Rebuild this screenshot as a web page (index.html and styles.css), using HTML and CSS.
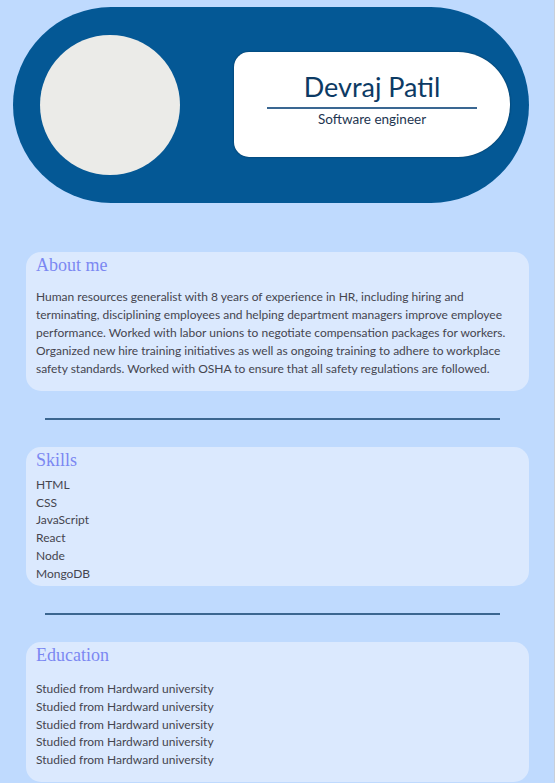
FILE: index.html
```html
<!DOCTYPE html>
<html lang="en">
<head>
  <meta charset="UTF-8" />
  <meta name="viewport" content="width=device-width, initial-scale=1.0">
  <title>Devraj Patil - Resume</title>
  <link rel="stylesheet" href="styles.css">
</head>
<body>

  <!-- Header -->
  <div class="header">
    <div class="photo"></div>
    <div class="nameCard">
      <h1>Devraj Patil</h1>
      <hr>
      <p>Software engineer</p>
    </div>
  </div>

  <div class="section about">
    <h3>About me</h3>
    <p>Human resources generalist with 8 years of experience in HR, including hiring and terminating, disciplining employees and helping department managers improve employee performance. Worked with labor unions to negotiate compensation packages for workers. Organized new hire training initiatives as well as ongoing training to adhere to workplace safety standards. Worked with OSHA to ensure that all safety regulations are followed.</p>
  </div>

  <hr class="divider">

  <div class="section skills">
    <h3>Skills</h3>
    <ul>
      <li>HTML</li>
      <li>CSS</li>
      <li>JavaScript</li>
      <li>React</li>
      <li>Node</li>
      <li>MongoDB</li>
    </ul>
  </div>

  <hr class="divider">

  <div class="section education">
    <h3>Education</h3>
    <ul>
      <li>Studied from Hardward university</li>
      <li>Studied from Hardward university</li>
      <li>Studied from Hardward university</li>
      <li>Studied from Hardward university</li>
      <li>Studied from Hardward university</li>
    </ul>
  </div>

</body>
</html>
```

FILE: styles.css
```css
* { margin: 0; padding: 0; box-sizing: border-box; }
html, body {
  font-family: 'Lato', 'Noto Sans', sans-serif;
  background: #bfdafe;
  color: #45454f;
}
body {
  padding: 7px 25px 0 13px;
  border-right: 1px solid #c9cfd8;
}

.header {
  display: flex;
  align-items: center;
  justify-content: space-between;
  height: 196px;
  padding: 0 19px 0 27px;
  background: #045895;
  border-radius: 98px;
}
.photo {
  width: 140px;
  height: 140px;
  border-radius: 50%;
  background: #ebebe8;
}
.nameCard {
  align-self: flex-start;
  margin-top: 45px;
  width: 276px;
  height: 105px;
  padding-top: 17px;
  background: #fff;
  border-radius: 15px 52px 52px 15px;
  box-shadow: 0 0 2px rgba(0,0,0,0.45);
  text-align: center;
}
.nameCard h1 {
  font-size: 27px;
  font-weight: normal;
  line-height: 36px;
  color: #0c3a64;
}
.nameCard hr {
  width: 210px;
  margin: 2px auto 0;
  border: none;
  border-top: 2px solid #3a6792;
}
.nameCard p {
  font-size: 13.5px;
  line-height: 20px;
  color: #1e3550;
}

.section {
  margin-left: 13px;
  background: #dbe9fe;
  border-radius: 15px;
  padding: 3px 10px 13px;
  font-size: 12px;
  line-height: 17.7px;
}
.section h3 {
  font-family: 'Liberation Serif', serif;
  font-size: 18px;
  font-weight: normal;
  line-height: 21px;
  color: #7b88f2;
}
.section ul { list-style: none; }

.about { margin-top: 49px; }
.about p { margin-top: 12px; line-height: 18px; }

.skills { padding-bottom: 4px; }
.skills ul { margin-top: 5px; }

.education ul { margin-top: 14px; }

.divider {
  width: 455px;
  margin: 27px 0 27px 32px;
  border: none;
  border-top: 2px solid #3b6690;
}
```
